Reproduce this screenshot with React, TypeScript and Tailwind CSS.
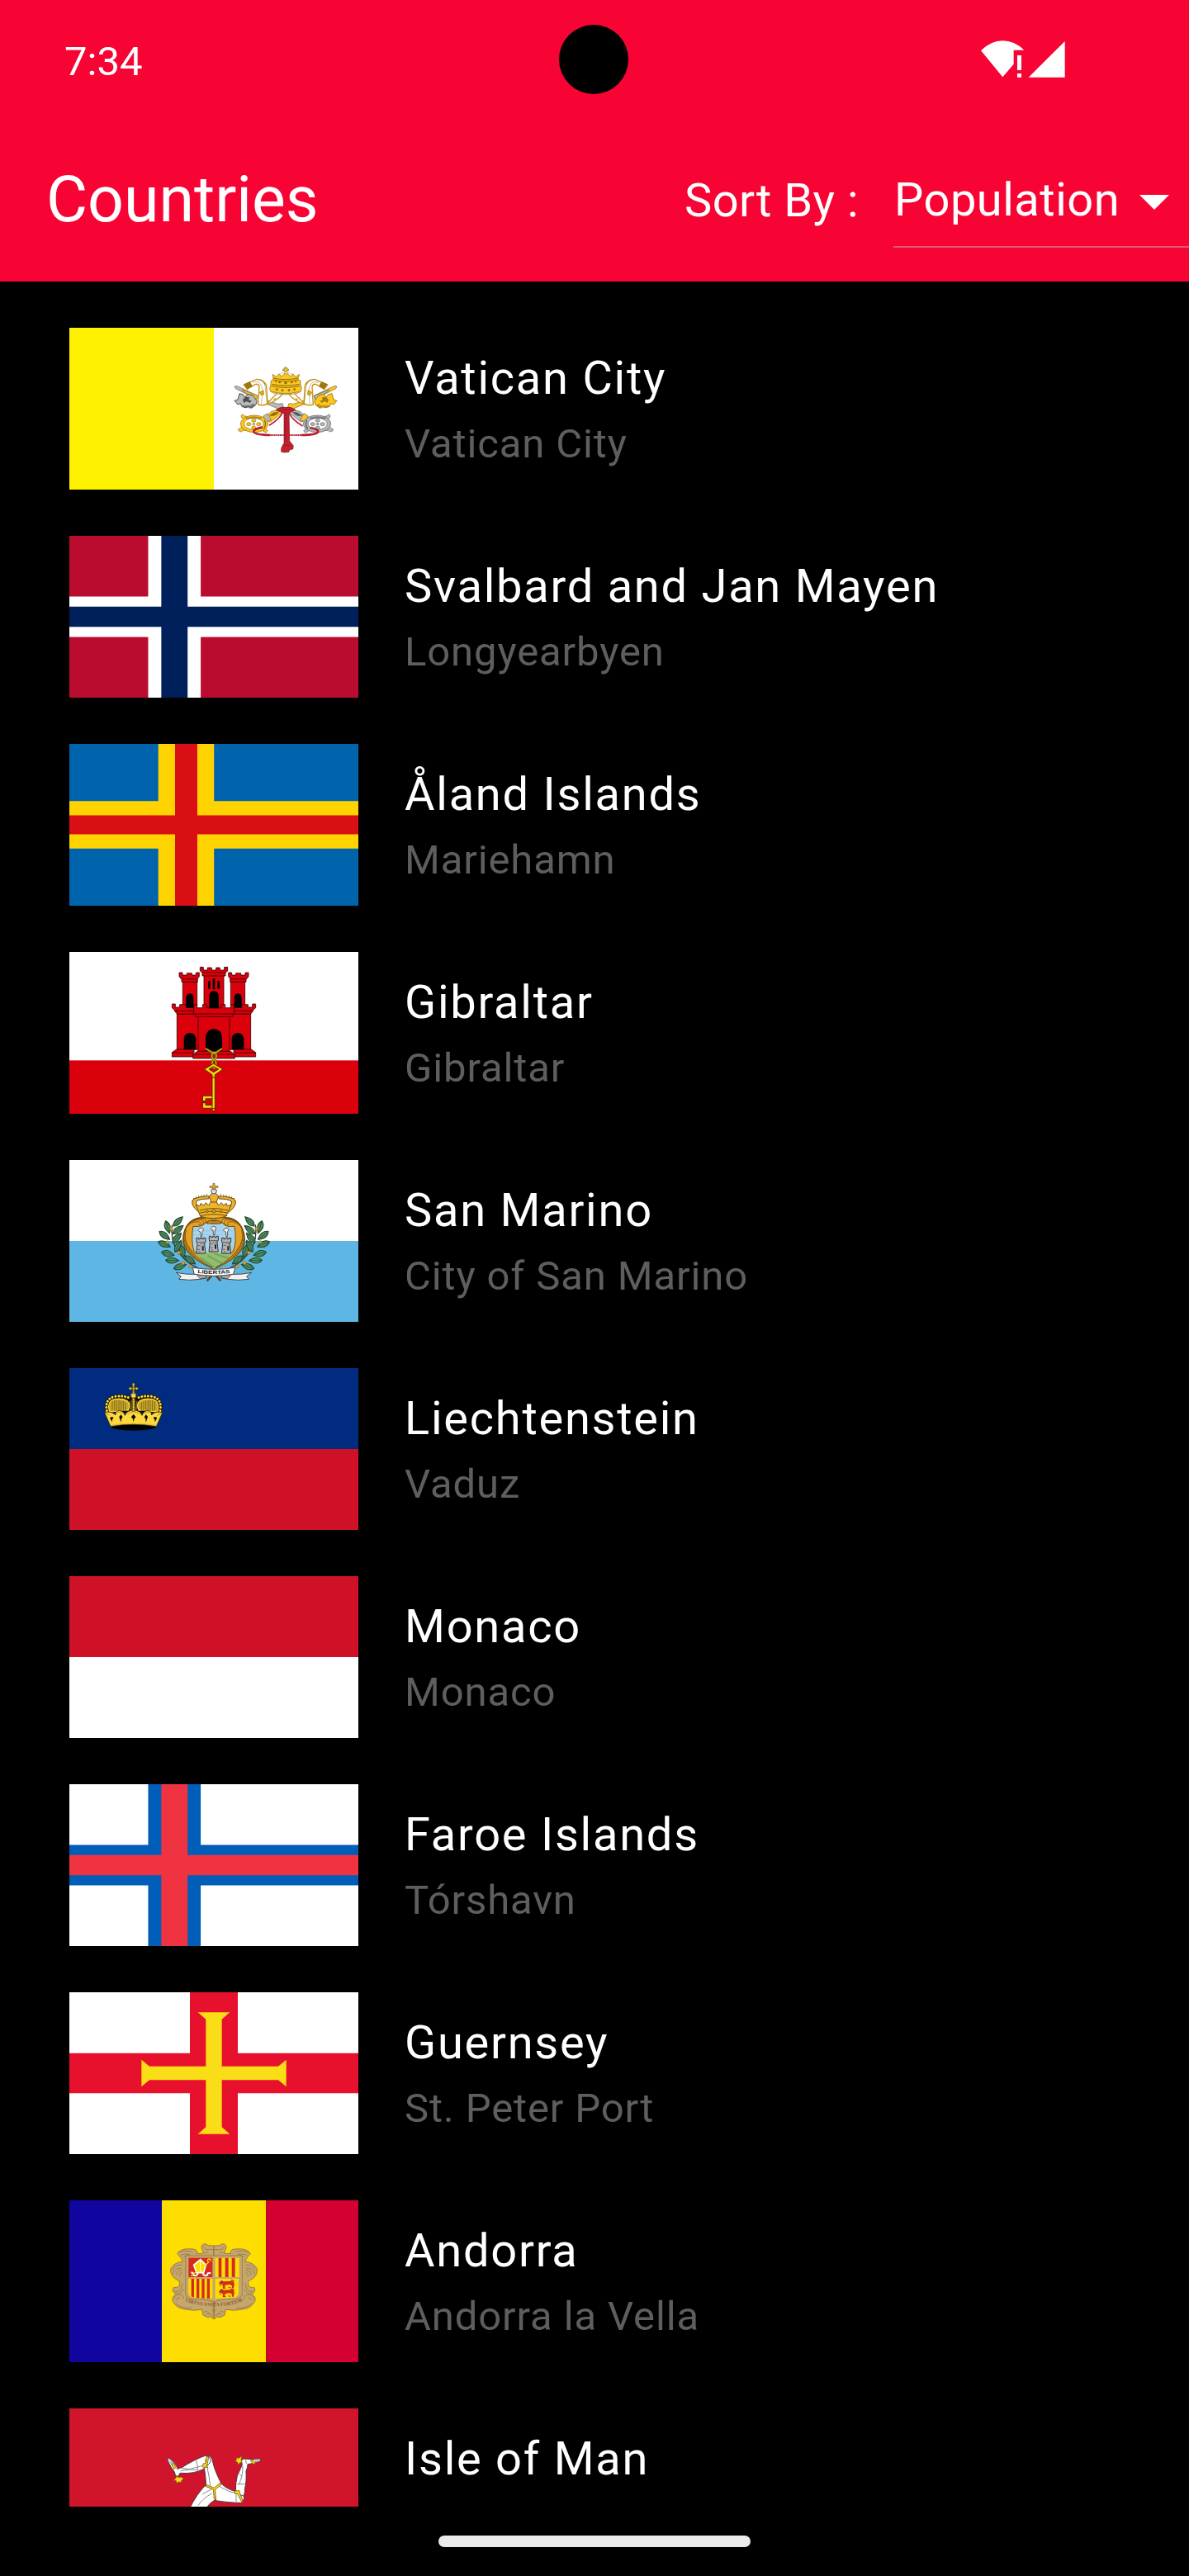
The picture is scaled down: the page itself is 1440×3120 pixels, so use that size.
import type { ReactNode } from 'react'

type FlagProps = { top: number; left?: number; children: ReactNode }

function FlagCanvas({ top, left = 72, children }: FlagProps) {
  return (
    <svg
      className="block h-[196px] w-[350px] shrink-0"
      viewBox={`${left} ${top} 1050 588`}
      preserveAspectRatio="none"
    >
      {children}
    </svg>
  )
}

function Mirror({ cx, children }: { cx: number; children: ReactNode }) {
  return (
    <>
      {children}
      <g transform={`translate(${cx * 2} 0) scale(-1 1)`}>{children}</g>
    </>
  )
}

function Key({ metal, dark, shank }: { metal: string; dark: string; shank: string }) {
  return (
    <g stroke="#6b6040" strokeWidth="2" strokeLinejoin="round">
      <path d="M672 264l8-2 76 36-4 12-76-38z" fill={metal} />
      <path d="M700 276l56 22-4 14-46-28z" fill={shank} />
      <path d="M780 312l50 16 16-2 4 12-18 8-60-26z" fill={metal} />
      <path
        d="M690 290l14 4 6 10 10-12 20 6 14 20-4 12-16 12-14-8-6 8-16-6-4-10-10 4-12-14 12-4z"
        fill={metal}
        stroke={dark}
        strokeWidth="3"
      />
      <path d="M702 312l10-10 14 2-2 10 10 2-6 8-12-6-10 6z" fill={dark} stroke="none" />
      <path d="M700 340l34 4 16-12-14-6-6 8-30-2z" fill={dark} stroke="none" opacity=".6" />
    </g>
  )
}

function KeyBow({ metal, dark, collar }: { metal: string; dark: string; collar: string }) {
  return (
    <g stroke={dark} strokeWidth="2">
      <path d="M838 346l14 8-50 40-22-12 24-26z" fill={metal} />
      <path d="M776 372l16-10 14 24-18 6z" fill={collar} />
      <path d="M800 370q14-14 32-12-12 16-32 12z" fill={dark} />
      <g fill={metal}>
        <path d="M698 378l-2-8 6-5 6 6 14 4-8 16zM688 426l-3-6 8-4 8-10 14 18-12 0-6 5zM772 424l12-10 4 6 5 6-7 6-6-3z" />
        <ellipse cx="744" cy="400" rx="50" ry="31" />
      </g>
      <ellipse cx="742" cy="400" rx="35" ry="21" fill="#fff" />
      <path d="M712 378q32-10 60 0l-4 6q-28-8-52 0z" fill={dark} stroke="none" opacity=".6" />
      <path d="M780 386q10 14-2 32" fill="none" strokeWidth="4" />
      <g fill={metal}>
        <ellipse cx="742" cy="388" rx="8" ry="5" />
        <ellipse cx="724" cy="401" rx="8" ry="6" />
        <ellipse cx="760" cy="401" rx="8" ry="6" />
        <ellipse cx="742" cy="414" rx="8" ry="5" />
        <circle cx="742" cy="401" r="4" />
      </g>
    </g>
  )
}

function VaticanFlag() {
  return (
    <FlagCanvas top={51}>
      <rect x="72" y="51" width="525" height="588" fill="#fff200" />
      <rect x="597" y="51" width="525" height="588" fill="#fff" />
      <Key metal="#b8b9bb" dark="#4d4d50" shank="#fcc61f" />
      <g transform="translate(1716 0) scale(-1 1)">
        <Key metal="#fcc61f" dark="#a57c10" shank="#b8b9bb" />
      </g>
      <Mirror cx={858}>
        <g fill="#fff" stroke="#c9940f" strokeWidth="4">
          <path d="M706 258l46-20q28 0 36 24l4 64q-14 10-34 4l4-66q-4-10-14-8l-30 18z" />
          <path d="M848 290q-16 24-60 40l22-24q14-14 20-18z" />
        </g>
        <path d="M706 256l22-10 10 18-20 10z" fill="#9b7712" />
        <path d="M764 286l12-6 2 12-8 3zM778 248l6 10M814 312l8-4" fill="#f4c430" stroke="#c9940f" strokeWidth="4" />
        <path d="M736 250q34-12 38 28l-4 50M760 240q24 6 24 30l6 54" fill="none" stroke="#8f7a35" strokeWidth="1.5" />
      </Mirror>
      <KeyBow metal="#fcc61f" dark="#8a6a10" collar="#b8b9bb" />
      <g transform="translate(1716 0) scale(-1 1)">
        <KeyBow metal="#b8b9bb" dark="#58585b" collar="#fcc61f" />
      </g>
      <g stroke="#7f6410" strokeWidth="2" strokeLinejoin="round">
        <path d="M854 195h8v6h6v6h-6v8h-8v-8h-6v-6h6z" fill="#f4c430" />
        <path d="M828 226q30-28 60 0" fill="#fff" stroke="#b8a877" />
        <path
          d="M810 220l12 8 8-4 4-6 8 10 10-10h14l10 10 8-10 4 6 8 4 12-8-6 18 10 6 0 14 4 14-4 12q-54 14-108 0l-4-12 4-14 0-14 10-6z"
          fill="#fcc61f"
        />
        <path d="M812 240q46 12 92 0M806 262q52 12 104 0M808 256q50 10 100 0M812 234q46 10 92 0" fill="none" stroke="#8d6b0c" strokeWidth="3" />
        <g fill="#8d6b0c" stroke="none">
          <circle cx="836" cy="249" r="4" />
          <circle cx="858" cy="251" r="5" />
          <circle cx="880" cy="249" r="4" />
          <circle cx="822" cy="247" r="3" />
          <circle cx="894" cy="247" r="3" />
          <circle cx="826" cy="275" r="4" />
          <circle cx="846" cy="278" r="4" />
          <circle cx="870" cy="278" r="4" />
          <circle cx="890" cy="275" r="4" />
        </g>
        <path d="M812 284q46 12 92 0l-4 6q-42 8-84 0z" fill="#fff" />
      </g>
      <g fill="none" stroke="#b71f2c">
        <path d="M848 358q-14 26-50 48M868 358q16 30 52 50" strokeWidth="5" />
        <path d="M774 412q-32 6-32 16 0 11 60 13M914 441q60-1 62-12 0-10-30-15" strokeWidth="8" />
        <path d="M798 441h120" strokeWidth="6" strokeDasharray="4 1.5" />
      </g>
      <path d="M822 350q16-14 36-10 20-4 36 10l-24 10 2 102 14 18-2 12-12 2-2 8q-16 4-28 0v-14l10-18 0-108z" fill="#c1202e" stroke="#7d1620" strokeWidth="2" />
      <path d="M858 362v100M836 348l44 2M846 478h28" stroke="#7d1620" strokeWidth="3" strokeDasharray="4 3" />
    </FlagCanvas>
  )
}

type CrossProps = { field: string; outer: string; inner: string; v: number[]; h: number[] }

/* Nordic cross: v and h hold the four edges of the outer and inner bars. */
function NordicFlag({ field, outer, inner, v, h }: CrossProps) {
  return (
    <svg className="block h-[196px] w-[350px] shrink-0" viewBox="0 0 350 196">
      <rect width="350" height="196" fill={field} />
      <path d={`M${v[0]} 0H${v[3]}V196H${v[0]}zM0 ${h[0]}H350V${h[3]}H0z`} fill={outer} />
      <path d={`M${v[1]} 0H${v[2]}V196H${v[1]}zM0 ${h[1]}H350V${h[2]}H0z`} fill={inner} />
    </svg>
  )
}

function GibraltarFlag() {
  const line = '#3d0004'
  return (
    <FlagCanvas top={39}>
      <rect x="72" y="39" width="1050" height="588" fill="#fff" />
      <rect x="72" y="433" width="1050" height="194" fill="#da000c" />
      <g fill="#da000c" stroke={line} strokeWidth="2.5">
        <Mirror cx={597}>
          <path d="M484 148h52v84h-52z" />
          <path d="M480 137h58v11h-58z" />
          <path d="M471 114h12v9h16v-7h18v7h15v-9h12v14l-7 9h-59l-7-9z" />
          <path d="M463 264h82v130h-82z" />
          <path d="M454 253h76v11h-67z" />
          <path d="M445 228h12v12h16v-10h22v10h14v-10h16v23h-68l-12-11z" />
          <path d="M461 393h64v12h-4v15h-76v-16z" />
          <path d="M445 405h78" />
        </Mirror>
        <path d="M561 124h72v120h-72z" />
        <path d="M555 112h84v14h-84z" />
        <path d="M547 94h12v11h15v-9h15v9h16v-9h14v9h16v-11h12v14l-8 6h-84l-8-6z" />
        <path d="M540 272h114v128H540z" />
        <path d="M528 263h138v11H530z" />
        <path d="M524 230h12v12h20v-12h14v12h54v-12h14v12h20v-12h12v34H524z" />
        <path d="M536 400h122l15 12v14H521v-14z" />
        <path d="M521 411h152" />
      </g>
      <g fill="#000">
        <Mirror cx={597}>
          <path d="M496 242v-35q0-16 14-17 13 1 13 17v35z" />
          <path d="M488 393v-36q0-22 22-24 22 2 22 24v36z" />
          <rect x="576" y="144" width="8" height="29" rx="2" />
        </Mirror>
        <rect x="593" y="136" width="8" height="39" rx="2" />
        <path d="M580 244v-42q0-20 17-21 18 1 18 21v42z" />
        <path d="M567 399v-45q0-33 30-36 30 3 30 36v45z" />
      </g>
      <g fill="none" stroke="#5a4a00" strokeWidth="9">
        <path d="M567 390l31 19 29-19" />
        <ellipse cx="598" cy="416" rx="8" ry="12" />
        <ellipse cx="598" cy="446" rx="7" ry="15" />
      </g>
      <g fill="none" stroke="#d4b012" strokeWidth="4">
        <path d="M567 390l31 19 29-19" />
        <ellipse cx="598" cy="416" rx="8" ry="12" />
        <ellipse cx="598" cy="446" rx="7" ry="15" />
      </g>
      <g fill="none">
        <path d="M562 583v-16h29M562 585v16h29M578 567v10M578 601v-10" stroke="#5a2a00" strokeWidth="13" />
        <path d="M562 579v-12h29M562 589v12h29" stroke="#f8d80e" strokeWidth="8" />
        <path d="M572 574h12v20h-12z" fill="#da000c" />
      </g>
      <path
        d="M562 465l34-20 34 20-29 20v131h-10V485zm17 0l17 11 18-11-18-10z"
        fill="#f8d80e"
        fillRule="evenodd"
        stroke="#5a2a00"
        strokeWidth="3"
      />
      <path d="M590 495h13M590 608h13" stroke="#5a2a00" strokeWidth="3" />
    </FlagCanvas>
  )
}

const leaves: [number, number, number][] = [
  [467, 268, -45],
  [429, 289, 72],
  [467, 298, -38],
  [418, 319, 38],
  [463, 328, -50],
  [417, 351, 22],
  [467, 358, -62],
  [430, 385, 14],
  [483, 378, 78],
  [446, 410, 2],
  [511, 408, 38],
  [474, 432, -18],
]

function Leaves() {
  return (
    <g>
      <path d="M446 280q-8 60 22 98 26 40 70 58" fill="none" stroke="#3c3a20" strokeWidth="4" />
      {leaves.map(([x, y, r]) => (
        <g key={`${x}-${y}`} transform={`translate(${x} ${y}) rotate(${r})`}>
          <path d="M-24 0Q-6-20 24 0 -6 20-24 0z" fill="#4a8a5f" stroke="#1f4229" strokeWidth="3" />
          <path d="M-20 0h40" stroke="#234b2e" strokeWidth="2" />
        </g>
      ))}
      <g fill="#e8a02c" stroke="#7a5212" strokeWidth="1.5">
        <circle cx="442" cy="295" r="6" />
        <circle cx="428" cy="343" r="5" />
        <circle cx="470" cy="382" r="6" />
        <circle cx="485" cy="419" r="6" />
        <circle cx="512" cy="432" r="6" />
      </g>
    </g>
  )
}

function Tower({ x, y }: { x: number; y: number }) {
  return (
    <g transform={`translate(${x} ${y})`}>
      <path d="M0-4l-2-18q-12-4-5-11 7-6 14-1 7 6-2 10l-1 20z" fill="#eee" stroke="#444" strokeWidth="2.5" />
      <path d="M-16 0h7v4h6v-4h7v4h6v-4h7v14l-4 8 4 34h-34l4-34-3-8z" fill="#b4b4b4" stroke="#333" strokeWidth="3" />
      <path d="M-12 16h26M-10 28h8M2 30h10M-12 42h8M-8 50h6M6 22h6M-2 22h4" stroke="#444" strokeWidth="2.5" />
      <path d="M4 32h6v14h-6z" fill="#222" />
    </g>
  )
}

function SanMarinoFlag() {
  return (
    <FlagCanvas top={45}>
      <rect x="72" y="45" width="1050" height="294" fill="#fff" />
      <rect x="72" y="339" width="1050" height="294" fill="#5eb6e4" />
      <Mirror cx={597}>
        <Leaves />
      </Mirror>
      <path d="M572 484l30-34M622 484l-30-34" stroke="#5d4420" strokeWidth="8" />
      <path
        d="M597 268q50-24 86 4 26 22 26 62-2 60-112 106-110-46-112-106 0-40 26-62 36-28 86-4z"
        fill="#e8a11f"
        stroke="#654511"
        strokeWidth="4"
      />
      <path d="M522 286q36 4 44-14 28 8 62 0 8 18 44 14 10 60-6 92l-69 56-72-56q-12-40-3-92z" fill="#a8d4ee" stroke="#6b4b15" strokeWidth="3" />
      <path d="M520 302h156M518 316h158M518 330h158" stroke="#7db7da" strokeWidth="1.5" />
      <path d="M530 384q30 2 44-3 30-6 48 2l42 2q-22 34-67 55-46-24-67-56z" fill="#90bd6e" />
      <path d="M574 392l66 36M600 386l56 18M548 400l48 34" stroke="#74a457" strokeWidth="6" />
      <Tower x={550} y={328} />
      <Tower x={596} y={322} />
      <Tower x={642} y={328} />
      <Mirror cx={597}>
        <path
          d="M597 262q-16 8-28 12 2-18-20-20-32 2-50 30-24 44 20 96 26 32 72 56-104-40-104-106 2-52 34-68 38-18 76 0z"
          fill="#e8a11f"
          stroke="#654511"
          strokeWidth="2.5"
        />
        <path d="M496 300q-16 66 60 118M504 284q16-24 46-22 14 4 8 16-8 8-16 2M516 274q14-8 28-4 8 4 2 8M489 330q4 40 40 70" fill="none" stroke="#8c601a" strokeWidth="3" />
      </Mirror>
      <path d="M576 266h42l4 10h-50z" fill="#c88716" stroke="#654511" strokeWidth="2.5" />
      <g stroke="#6d4c10" strokeWidth="3" strokeLinejoin="round">
        <path d="M597 180q-40 2-58 10-14 10 0 24l8 16h100l8-16q14-14 0-24-18-8-58-10z" fill="#fff" />
        <path d="M524 186q20-8 56-10l-2 10q-30 0-44 8-6 8 8 22l8 14-8 4q-36-28-18-48z" fill="#edb52a" />
        <path d="M670 186q-20-8-56-10l2 10q30 0 44 8 6 8-8 22l-8 14 8 4q36-28 18-48z" fill="#edb52a" />
        <path d="M538 222l-6-14 14 4 4-10 10 8 8-10 10 10 8-14 10-12 10 12 8 14 10-10 8 10 10-8 4 10 14-4-6 14-14 28q-46 14-92 0z" fill="#edb52a" />
        <path d="M546 228q50-14 102 0M544 238q52-14 106 0M548 248q48-12 98 0" fill="none" />
        <path d="M590 166h14l10 12-8 20h-18l-8-20z" fill="#edb52a" />
        <circle cx="597" cy="158" r="10" fill="#d8e2ea" stroke="#555" />
        <path d="M594 130h6v10h12v5h-12v7h-6v-7h-12v-5h12z" fill="#edb52a" strokeWidth="2" />
      </g>
      <g fill="#d9a425" stroke="#5a4010" strokeWidth="2">
        <circle cx="597" cy="231" r="6" />
        <circle cx="572" cy="232" r="4" />
        <circle cx="622" cy="232" r="4" />
      </g>
      <path d="M519 196q2-14 20-17M675 196q-2-14-20-17M540 178l38-8M654 178l-38-8" fill="none" stroke="#7b5a20" strokeWidth="5" strokeDasharray="4 6" />
      <Mirror cx={597}>
        <path d="M530 460q-30 2-70-6 12 8 18 14l-8 10q40 6 76 0l24-4v-12z" fill="#f1f1f1" stroke="#444" strokeWidth="3" />
        <path d="M536 464l30-4 4 12-24 4z" fill="#a9a9a9" stroke="#444" strokeWidth="2" />
      </Mirror>
      <path d="M520 436q76 12 154 0l-6 24q-70 12-142 0z" fill="#fff" stroke="#444" strokeWidth="3" />
      <path id="motto-sm" d="M526 454q72 10 144 0" fill="none" />
      <text fontFamily="Liberation Sans" fontWeight="bold" fontSize="18" fill="#111">
        <textPath href="#motto-sm" startOffset="12" textLength="118" lengthAdjust="spacingAndGlyphs">
          LIBERTAS
        </textPath>
      </text>
    </FlagCanvas>
  )
}

function LiechtensteinFlag() {
  return (
    <FlagCanvas top={51}>
      <rect x="72" y="51" width="1050" height="294" fill="#002b7f" />
      <rect x="72" y="345" width="1050" height="294" fill="#ce1126" />
      <ellipse cx="305" cy="264" rx="82" ry="14" fill="#000" />
      <path d="M214 214q-12-44 24-54 40-6 67 6 27-12 67-6 36 10 24 54z" fill="#0a0a0a" />
      <Mirror cx={305}>
        <path d="M218 210q-12-40 20-46 24-4 44 6 14 12 4 34-30-2-46 4z" fill="#c9a62b" stroke="#ffd83d" strokeWidth="4" />
        <path d="M228 172v32M236 168v38M244 168v38M252 168v36M260 170v34M268 172v32M276 176v28" stroke="#5d4b0d" strokeWidth="2" />
        <path d="M208 208q-8-46 30-54 34-4 58 8" fill="none" stroke="#1a1604" strokeWidth="12" strokeLinecap="round" />
        <path d="M208 206q-8-44 30-52 34-4 58 8" fill="none" stroke="#ffd83d" strokeWidth="9" strokeLinecap="round" strokeDasharray="0.1 11.5" />
        <path d="M292 170l4 38M300 166v42" stroke="#8c7319" strokeWidth="4" />
      </Mirror>
      <path
        d="M200 213q14-6 28 0l12 8q-2-14 14-16 14 2 20 18 6-18 31-20 25 2 31 20 6-16 20-18 16 2 14 16l12-8q14-6 28 0l-22 50q-83-14-166 0z"
        fill="#ffd83d"
        stroke="#2b2406"
        strokeWidth="2.5"
      />
      <Mirror cx={305}>
        <path d="M219 232l8-4 6 4-5 5-1 10-5-10zM253 228l7-8 6 10-5 4-1 14-5-14z" fill="#000" />
        <path d="M206 218q8-2 14 6M246 212q10-6 18 4M286 218q4-8 19-9" fill="none" stroke="#8c7319" strokeWidth="2" />
      </Mirror>
      <path d="M296 230l9-12 9 12-6 3-3 14-3-14z" fill="#000" />
      <path d="M224 260q81-12 162 0" fill="none" stroke="#957c1c" strokeWidth="5" strokeDasharray="2 4" />
      <g fill="#ffd83d" stroke="#4a3e0c" strokeWidth="2">
        <rect x="296" y="142" width="18" height="17" rx="5" />
        <path d="M301 160h8v48h-8z" />
        <path d="M301 168h8M301 178h8M301 188h8M301 198h8" />
        <path d="M302 132h6v12h-6z" />
        <path d="M290 122h30v6h-30zM302 106h6v28h-6z" />
        <circle cx="305" cy="110" r="4.5" />
        <circle cx="293" cy="125" r="4.5" />
        <circle cx="317" cy="125" r="4.5" />
        <circle cx="305" cy="125" r="4" />
      </g>
    </FlagCanvas>
  )
}

function MonacoFlag() {
  return (
    <div className="flex h-[196px] w-[350px] shrink-0 flex-col">
      <div className="flex-1 bg-[#ce1126]" />
      <div className="flex-1 bg-white" />
    </div>
  )
}

function GuernseyFlag() {
  return (
    <FlagCanvas top={39}>
      <rect x="72" y="39" width="1050" height="588" fill="#fff" />
      <path d="M510 39h174v588H510zM72 260h1050v146H72z" fill="#e8112d" />
      <path
        d="M539 112h116l-29 25v171h205l29-24v98l-29-24H626v171l29 25H539l29-25V358H363l-29 24v-98l29 24h205V137z"
        fill="#f9dd16"
      />
    </FlagCanvas>
  )
}

function AndorraFlag() {
  return (
    <FlagCanvas top={45}>
      <rect x="72" y="45" width="336" height="588" fill="#10069f" />
      <rect x="408" y="45" width="379" height="588" fill="#fedd00" />
      <rect x="787" y="45" width="335" height="588" fill="#d50032" />
      <Mirror cx={597}>
        <path
          d="M597 210q-22 2-32-7-14 2-13 14 4 12 8 20l-24 2q4-16-16-17-32-3-44 6-10 4-12 12 10 8 14 16l6 12q-32 2-44 26-2 26 20 38l12 6 0 18q-10 8-22 6-6 8 0 16l8 8q-16 12-10 26 12 24 40 28 34 8 66 2 2 14 4 20 14 12 28 6l9 8z"
          fill="#c6a76b"
          stroke="#8f6f43"
          strokeWidth="2.5"
        />
        <path
          d="M560 214q4 12 20 10h17M562 238q10-10 14 0M470 234q18-8 48-2M476 244q18-8 36 0M486 252l22-14M448 296q8-18 34-16M450 312q2-22 30-20M462 318q-2-20 20-18M476 322q-10-10 6-14M454 376q14 4 24-8l6-22M458 384q20 2 28-16M452 402q4-16 24-14 14 4 10 16M460 410q2-12 14-12M458 420q26 20 58 16M560 452q10-8 20 4M568 462q10-10 22 2M588 442l9 8"
          fill="none"
          stroke="#96774a"
          strokeWidth="2.5"
        />
      </Mirror>
      <path d="M494 246h206v136q0 20-24 22-62 2-79 10-17-8-79-10-24-2-24-22z" fill="#c6a76b" stroke="#9a7747" strokeWidth="2.5" />
      <path d="M505 254h87v70h-87z" fill="#d52b1e" />
      <path d="M602 254h87v70h-87zM505 330h87v72l-68-4q-19-2-19-18zM602 330h85v50q0 16-18 18l-67 4z" fill="#fedd00" />
      <g fill="#d52b1e">
        <path d="M614 254h11v70h-11zM638 254h12v70h-12zM662 254h12v70h-12zM515 330h10v68l-10-4zM534 330h10v70h-10zM553 330h10v71h-10zM572 330h10v72h-10z" />
      </g>
      <path d="M548 260l20 20-8 28h-26l-10-28z" fill="#fedd00" stroke="#fff" strokeWidth="5" />
      <path d="M548 262v46" stroke="#fff" strokeWidth="3" />
      <path d="M540 310q-8 14-18 6 2-10-8-8M556 310q8 14 18 6-2-10 12-6" fill="none" stroke="#fff" strokeWidth="6" />
      <path d="M514 320l20-16M562 284l16-14q-8-8 0-12 8 0 8 8" fill="none" stroke="#fedd00" strokeWidth="4" />
      {[0, 31].map((dy) => (
        <g key={dy} transform={`translate(0 ${dy})`} fill="#d52b1e">
          <path d="M617 342l8-6 8 4 32-2q8 4 6 14l-2 12h-6l-1-10-8-3-16 2-1 11h-8l1-10-6-5-8 2z" />
          <path d="M668 340q4-4 0-4h-10M626 350l-8 8M650 362h8M630 364h10" fill="none" stroke="#8b3015" strokeWidth="3" />
          <circle cx="626" cy="342" r="3" fill="#3f4c7c" />
        </g>
      ))}
      <path id="motto-ad" d="M490 410q40 20 107 20 67 0 107-20" fill="none" />
      <text fontFamily="Liberation Serif" fontWeight="bold" fontSize="19" fill="#8a5c35">
        <textPath href="#motto-ad" startOffset="2" textLength="216" lengthAdjust="spacingAndGlyphs">
          VIRTVS VNITA FORTIOR
        </textPath>
      </text>
    </FlagCanvas>
  )
}

function IsleOfManFlag() {
  return (
    <FlagCanvas top={51} left={-288}>
      <rect x="-288" y="51" width="1050" height="588" fill="#cf142b" />
      <g fill="#fff" stroke="#4a3a3c" strokeWidth="3" strokeLinejoin="round">
        <path d="M205 332q-30 30-56 82h60q10-18 34-32l-4-36z" />
        <path d="M201 260q-2-24 8-38 16 0 22 14 6 36 32 86l-24 24-30-14q-2-40-8-72z" />
        <path d="M262 322q20 22 52 30 20 2 32 12 4 22-10 30-40 0-92-8l-5-42z" />
        <path d="M208 222q-40 14-88 44l-14 4q-8-22-32-38-8 0-4 10 10 24 24 40l4 14 10 2 6-12q50 4 84-14l22-20q16-20-12-30z" />
        <path d="M316 350q0-30 6-54l18-40-4-16 10-6 26 2 28-2q12 2 6 8-26 10-46 12 0 12-6 24 2 40-4 62 0 16-4 30-16-2-30-20z" />
      </g>
      <path
        d="M212 262q8 34 12 70M196 362l42-22M180 404q16-26 50-44M256 334q34 22 66 26M116 278q30-8 68-2M172 240q8 18 6 34M120 268l28 4 46-12M342 260q0 40-14 68M322 326h28M330 290l8 8M318 362v28M98 268l12 6M204 236l12 34M80 248l14 0M352 238l4 14"
        fill="none"
        stroke="#8b8b90"
        strokeWidth="3"
      />
      <path d="M71 234l18 16 6 20-14-14z" fill="#bdbdc2" />
      <path d="M388 236l16 0-4 8-16 4z" fill="#bdbdc2" />
      <g fill="#f9d616" stroke="#7d5d12" strokeWidth="2.5" strokeLinejoin="round">
        <path d="M210 328l28 12 22-18 4 6-22 18 2 36-6-2-3-34-28-12z" />
        <path d="M210 226l8 2-4 22-4 16-14-2 2-12 10-2z" />
        <path d="M314 350h16l2 10 10 26-6 2-12-26-12-2z" />
        <path d="M84 254l8-4 6 16-6 6z" />
        <path d="M370 240l10-2 8 12-8 4z" />
        <path d="M102 296l6 6 12-2 6 8-6 4-2 8-10-2-6 6-2-10-10-2 8-6z" />
        <path d="M318 230l10 2 10-8-2 16 4 8-8 0-6 8-4-10-8-4 6-4z" />
      </g>
    </FlagCanvas>
  )
}

const countries: { name: string; capital?: string; flag: ReactNode }[] = [
  { name: 'Vatican City', capital: 'Vatican City', flag: <VaticanFlag /> },
  {
    name: 'Svalbard and Jan Mayen',
    capital: 'Longyearbyen',
    flag: (
      <NordicFlag
        field="#ba0c2f"
        outer="#fff"
        inner="#00205b"
        v={[95.45, 111.36, 143.2, 159.1]}
        h={[73.5, 85.75, 110.25, 122.5]}
      />
    ),
  },
  {
    name: 'Åland Islands',
    capital: 'Mariehamn',
    flag: (
      <NordicFlag field="#0064ad" outer="#ffd300" inner="#da0e15" v={[107.7, 128, 155, 175.2]} h={[69.2, 86.5, 109.5, 126.8]} />
    ),
  },
  { name: 'Gibraltar', capital: 'Gibraltar', flag: <GibraltarFlag /> },
  { name: 'San Marino', capital: 'City of San Marino', flag: <SanMarinoFlag /> },
  { name: 'Liechtenstein', capital: 'Vaduz', flag: <LiechtensteinFlag /> },
  { name: 'Monaco', capital: 'Monaco', flag: <MonacoFlag /> },
  {
    name: 'Faroe Islands',
    capital: 'Tórshavn',
    flag: (
      <NordicFlag
        field="#fff"
        outer="#005eb8"
        inner="#ef3340"
        v={[95.45, 111.36, 143.2, 159.1]}
        h={[73.5, 85.75, 110.25, 122.5]}
      />
    ),
  },
  { name: 'Guernsey', capital: 'St. Peter Port', flag: <GuernseyFlag /> },
  { name: 'Andorra', capital: 'Andorra la Vella', flag: <AndorraFlag /> },
  { name: 'Isle of Man', flag: <IsleOfManFlag /> },
]

function StatusBar() {
  return (
    <div className="flex h-[144px] items-center pl-[78px] pr-[149px]">
      <span className="w-[599px] pt-[6px] text-[49px] leading-[56px]">7:34</span>
      <span className="size-[84px] rounded-full bg-black" />
      <svg className="ml-auto block h-[46px] w-[103px]" viewBox="444 90 309 138" fill="#fff">
        <path d="M444 127Q480 91 523 91t78 34h-38v51l-40 47z" />
        <path d="M576 144h15v54h-15zM576 210h15v14h-15zM749 93v131H617z" />
      </svg>
    </div>
  )
}

function AppBar() {
  return (
    <div className="flex h-[197px] items-start pl-[56px]">
      <h1 className="pt-[49px] text-[77px] leading-[98px]">Countries</h1>
      <span className="ml-auto pt-[57px] text-[56px] leading-[84px] tracking-[0.5px]">Sort By :</span>
      <button className="ml-[42px] flex h-[156px] w-[358px] items-center justify-between border-b-2 border-[#de5c7a] pl-px pr-[24px] pt-[42px] text-left">
        <span className="text-[56px] leading-[84px] tracking-[0.5px]">Population</span>
        <svg className="mt-[5px] block h-[18px] w-[36px]" viewBox="0 0 36 18" fill="#fff">
          <path d="M0 0h36L18 18z" />
        </svg>
      </button>
    </div>
  )
}

export default function App() {
  return (
    <div className="flex h-[3120px] w-[1440px] flex-col overflow-hidden bg-black font-['Roboto',sans-serif] text-white">
      <header className="h-[341px] shrink-0 bg-[#f70435]">
        <StatusBar />
        <AppBar />
      </header>
      <ul className="flex h-[2695px] shrink-0 flex-col gap-[56px] overflow-hidden pl-[84px] pt-[56px]">
        {countries.map((c) => (
          <li key={c.name} className="flex h-[196px] shrink-0 gap-[56px]">
            {c.flag}
            <div className="pt-[19px]">
              <p className="text-[56px] leading-[84px] tracking-[1.75px]">{c.name}</p>
              {c.capital && (
                <p className="pt-[3px] text-[49px] leading-[70px] tracking-[0.875px] text-[#5d5e60]">{c.capital}</p>
              )}
            </div>
          </li>
        ))}
      </ul>
      <div className="flex flex-1 justify-center pt-[35px]">
        <div className="h-[14px] w-[378px] rounded-full bg-[#ebebeb]" />
      </div>
    </div>
  )
}
